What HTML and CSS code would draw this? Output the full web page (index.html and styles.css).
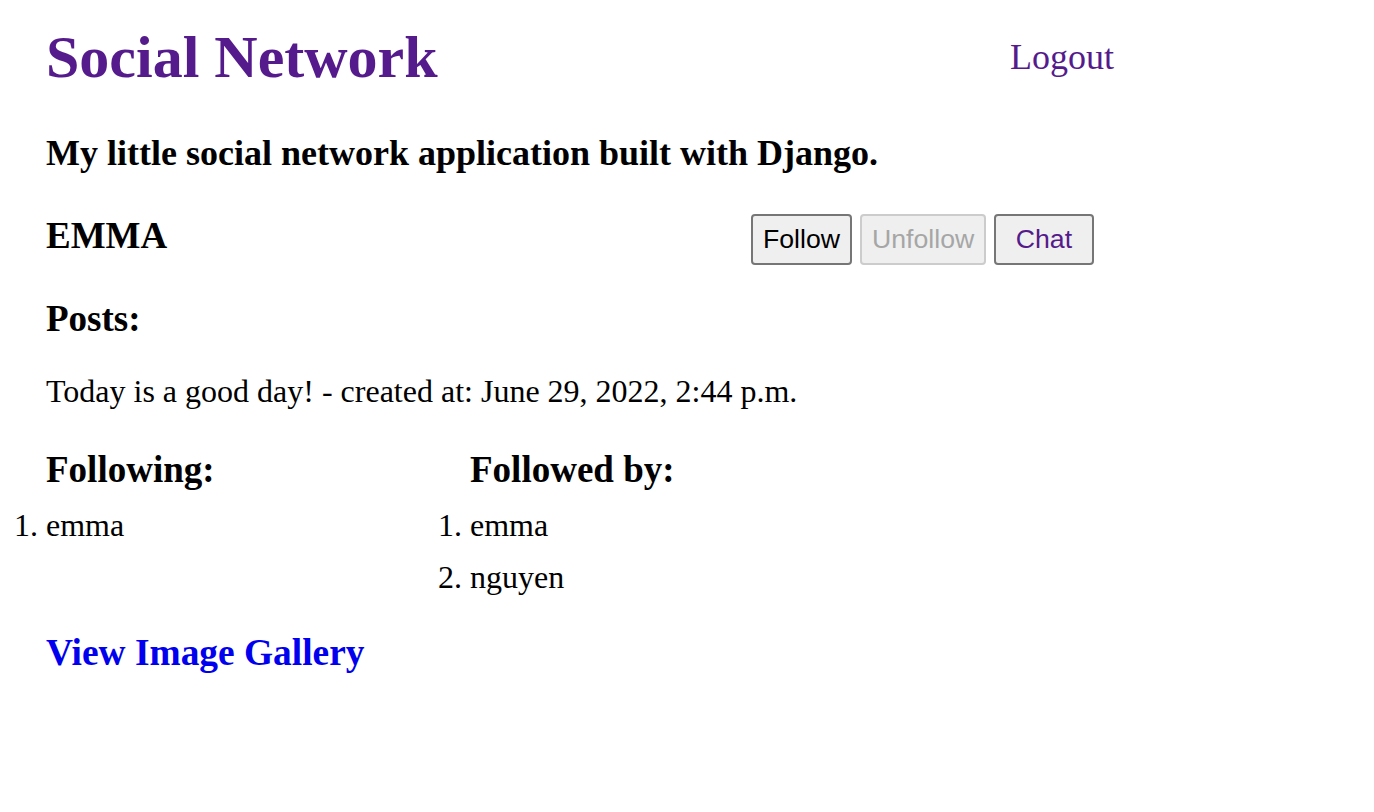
FILE: index.html
```html
<!DOCTYPE html>
<html lang="en">
<head>
<meta charset="utf-8">
<title>Social Network</title>
<link rel="stylesheet" href="styles.css">
</head>
<body>
<div class="page">
  <header class="site-header">
    <h1 class="brand"><a href="#">Social Network</a></h1>
    <a class="logout" href="#">Logout</a>
  </header>
  <h3 class="tagline">My little social network application built with Django.</h3>
  <div class="profile-row">
    <h3 class="username">EMMA</h3>
    <div class="actions">
      <button class="btn" type="button">Follow</button>
      <button class="btn" type="button" disabled>Unfollow</button>
      <button class="btn btn-chat" type="button"><a href="#">Chat</a></button>
    </div>
  </div>
  <h3 class="section-title posts-title">Posts:</h3>
  <p class="post">Today is a good day! - created at: June 29, 2022, 2:44 p.m.</p>
  <div class="follow-grid">
    <div class="follow-col">
      <h3 class="section-title">Following:</h3>
      <ol class="people">
        <li>emma</li>
      </ol>
    </div>
    <div class="follow-col">
      <h3 class="section-title">Followed by:</h3>
      <ol class="people">
        <li>emma</li>
        <li>nguyen</li>
      </ol>
    </div>
  </div>
  <h3 class="gallery"><a href="#">View Image Gallery</a></h3>
</div>
</body>
</html>
```
FILE: styles.css
```css
html, body {
  margin: 0;
  padding: 0;
  background: #ffffff;
}

body {
  font-family: "Liberation Serif", "Times New Roman", serif;
  color: #000000;
}

.page {
  padding: 22px 0 40px 46px;
}

a {
  text-decoration: none;
}

.site-header {
  display: grid;
  grid-template-columns: 964px auto;
  align-items: start;
}

.brand {
  margin: 0;
  font-size: 60px;
  line-height: 70px;
  font-weight: bold;
}

.brand a {
  color: #551a8b;
}

.logout {
  margin-top: 15px;
  font-size: 36px;
  line-height: 40px;
  color: #551a8b;
}

.tagline {
  margin: 40px 0 0;
  font-size: 36px;
  line-height: 42px;
  font-weight: bold;
}

.profile-row {
  display: grid;
  grid-template-columns: 705px auto;
  align-items: start;
  margin-top: 40px;
}

.username {
  margin: 0;
  font-size: 37px;
  line-height: 44px;
  font-weight: bold;
}

.actions {
  display: flex;
  gap: 8px;
}

.btn {
  height: 51px;
  padding: 0 10px;
  border: 2px solid #767676;
  border-radius: 4px;
  background: #efefef;
  color: #000000;
  font-family: "Liberation Sans", Arial, sans-serif;
  font-size: 26.67px;
  line-height: 1;
}

.btn:disabled {
  border-color: #cccccc;
  color: #a6a6a6;
}

.btn-chat {
  padding: 0 19.5px;
}

.btn-chat a {
  color: #551a8b;
}

.section-title {
  margin: 0;
  font-size: 37px;
  line-height: 44px;
  font-weight: bold;
}

.posts-title {
  margin-top: 32px;
}

.post {
  margin: 31px 0 0;
  font-size: 32px;
  line-height: 38px;
}

.follow-grid {
  display: grid;
  grid-template-columns: 424px auto;
  margin-top: 38px;
}

.people {
  margin: 7px 0 0;
  padding: 0;
  font-size: 32px;
  line-height: 52px;
}

.gallery {
  margin: 28px 0 0;
  font-size: 37.4px;
  line-height: 44px;
  font-weight: bold;
}

.gallery a {
  color: #0000ee;
}
```
